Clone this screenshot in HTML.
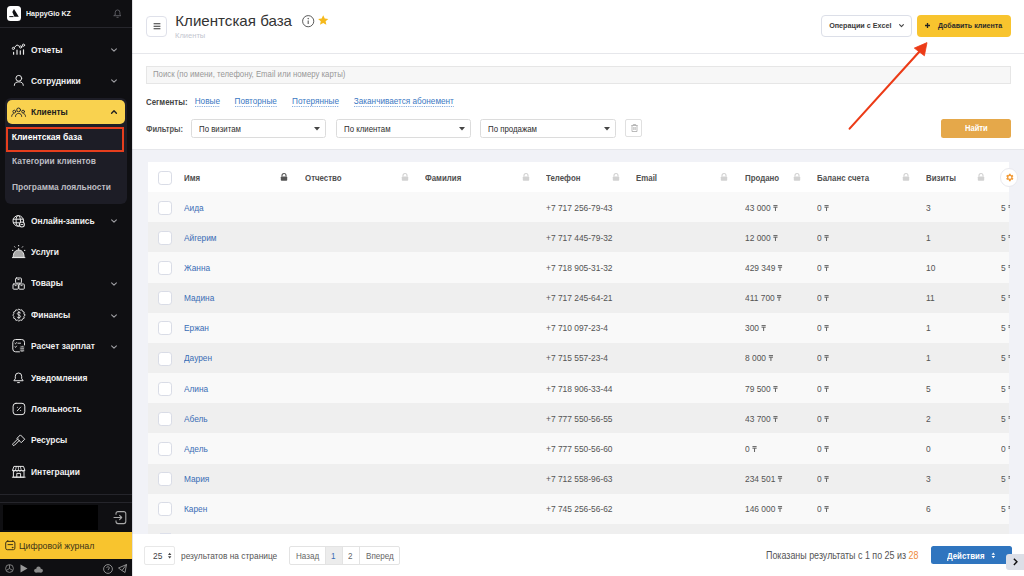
<!DOCTYPE html><html><head><meta charset="utf-8"><style>
*{margin:0;padding:0;box-sizing:border-box}
html,body{width:1024px;height:576px;overflow:hidden;background:#fff;font-family:"Liberation Sans",sans-serif}
.t{position:absolute;white-space:nowrap}
.a{position:absolute}
svg{position:absolute;overflow:visible}
.tg{text-decoration:overline;text-decoration-thickness:0.8px}
</style></head><body>
<div class="a" style="left:0;top:0;width:132px;height:576px;background:#0f0f12"></div>
<div class="a" style="left:6.7px;top:6px;width:14.4px;height:14.5px;background:#fff;border-radius:3.5px"></div>
<svg style="left:6.7px;top:6px" width="14" height="14" viewBox="0 0 14 14"><path d="M7 3 L11.8 10.7 L7.4 10.7 L5.3 5.9 Z" fill="#0f0f12"/><rect x="2.3" y="10.1" width="4.2" height="1" fill="#0f0f12"/></svg>
<div class="t" style="left:26px;top:6.50px;font-size:7.668px;line-height:14px;color:#f2f2f2;font-weight:bold;transform:scaleX(0.9259);transform-origin:0 50%;">HappyGio KZ</div>
<svg style="left:113.5px;top:8.5px" width="9" height="10" viewBox="0 0 9 10"><path d="M1.2 5.6 V3.6 A2.3 2.6 0 0 1 5.9 3.6 V5.6 L7 6.7 H0.1 Z M2.9 8.3 H4.2" fill="none" stroke="#5a5a60" stroke-width="1" stroke-linejoin="round" stroke-linecap="round"/></svg>
<div class="a" style="left:0;top:27px;width:132px;height:1px;background:#26262c"></div>
<div class="t" style="left:30.8px;top:42.60px;font-size:9.295px;line-height:14px;color:#f0f0f0;font-weight:bold;transform:scaleX(0.9091);transform-origin:0 50%;">Отчеты</div>
<svg style="left:111px;top:47.5px" width="6" height="4" viewBox="0 0 6 4"><path d="M0.6 0.8 L3 3.2 L5.4 0.8" fill="none" stroke="#a0a0a4" stroke-width="1.1" stroke-linecap="round" stroke-linejoin="round"/></svg>
<div class="t" style="left:30.8px;top:74.30px;font-size:9.295px;line-height:14px;color:#f0f0f0;font-weight:bold;transform:scaleX(0.9091);transform-origin:0 50%;">Сотрудники</div>
<svg style="left:111px;top:79.3px" width="6" height="4" viewBox="0 0 6 4"><path d="M0.6 0.8 L3 3.2 L5.4 0.8" fill="none" stroke="#a0a0a4" stroke-width="1.1" stroke-linecap="round" stroke-linejoin="round"/></svg>
<div class="a" style="left:4.5px;top:98px;width:122.5px;height:106px;background:#1d1d26;border-radius:6px"></div>
<div class="a" style="left:6.8px;top:100px;width:118.2px;height:24.3px;background:#f9d24f;border-radius:5px"></div>
<div class="t" style="left:30.8px;top:105.40px;font-size:9.295px;line-height:14px;color:#1c1c1c;font-weight:bold;transform:scaleX(0.9091);transform-origin:0 50%;">Клиенты</div>
<svg style="left:111px;top:110px" width="6" height="4" viewBox="0 0 6 4"><path d="M0.6 3.2 L3 0.8 L5.4 3.2" fill="none" stroke="#222" stroke-width="1.4" stroke-linecap="round" stroke-linejoin="round"/></svg>
<div class="a" style="left:6.3px;top:127px;width:118px;height:25px;border:2px solid #e63e1d"></div>
<div class="t" style="left:11.7px;top:130.20px;font-size:8.580px;line-height:14px;color:#ffffff;font-weight:bold;">Клиентская база</div>
<div class="t" style="left:11.7px;top:153.60px;font-size:9.083px;line-height:14px;color:#bcbcc2;font-weight:bold;transform:scaleX(0.9259);transform-origin:0 50%;">Категории клиентов</div>
<div class="t" style="left:11.7px;top:180.10px;font-size:9.104px;line-height:14px;color:#bcbcc2;font-weight:bold;transform:scaleX(0.9259);transform-origin:0 50%;">Программа лояльности</div>
<div class="t" style="left:30.8px;top:213.80px;font-size:9.295px;line-height:14px;color:#f0f0f0;font-weight:bold;transform:scaleX(0.9091);transform-origin:0 50%;">Онлайн-запись</div>
<svg style="left:111px;top:219.3px" width="6" height="4" viewBox="0 0 6 4"><path d="M0.6 0.8 L3 3.2 L5.4 0.8" fill="none" stroke="#a0a0a4" stroke-width="1.1" stroke-linecap="round" stroke-linejoin="round"/></svg>
<div class="t" style="left:30.8px;top:244.80px;font-size:9.295px;line-height:14px;color:#f0f0f0;font-weight:bold;transform:scaleX(0.9091);transform-origin:0 50%;">Услуги</div>
<div class="t" style="left:30.8px;top:276.40px;font-size:9.295px;line-height:14px;color:#f0f0f0;font-weight:bold;transform:scaleX(0.9091);transform-origin:0 50%;">Товары</div>
<svg style="left:111px;top:281.90000000000003px" width="6" height="4" viewBox="0 0 6 4"><path d="M0.6 0.8 L3 3.2 L5.4 0.8" fill="none" stroke="#a0a0a4" stroke-width="1.1" stroke-linecap="round" stroke-linejoin="round"/></svg>
<div class="t" style="left:30.8px;top:308.00px;font-size:9.295px;line-height:14px;color:#f0f0f0;font-weight:bold;transform:scaleX(0.9091);transform-origin:0 50%;">Финансы</div>
<svg style="left:111px;top:313.5px" width="6" height="4" viewBox="0 0 6 4"><path d="M0.6 0.8 L3 3.2 L5.4 0.8" fill="none" stroke="#a0a0a4" stroke-width="1.1" stroke-linecap="round" stroke-linejoin="round"/></svg>
<div class="t" style="left:30.8px;top:339.30px;font-size:9.295px;line-height:14px;color:#f0f0f0;font-weight:bold;transform:scaleX(0.9091);transform-origin:0 50%;">Расчет зарплат</div>
<svg style="left:111px;top:344.8px" width="6" height="4" viewBox="0 0 6 4"><path d="M0.6 0.8 L3 3.2 L5.4 0.8" fill="none" stroke="#a0a0a4" stroke-width="1.1" stroke-linecap="round" stroke-linejoin="round"/></svg>
<div class="t" style="left:30.8px;top:370.80px;font-size:9.295px;line-height:14px;color:#f0f0f0;font-weight:bold;transform:scaleX(0.9091);transform-origin:0 50%;">Уведомления</div>
<div class="t" style="left:30.8px;top:401.80px;font-size:9.295px;line-height:14px;color:#f0f0f0;font-weight:bold;transform:scaleX(0.9091);transform-origin:0 50%;">Лояльность</div>
<div class="t" style="left:30.8px;top:433.30px;font-size:9.295px;line-height:14px;color:#f0f0f0;font-weight:bold;transform:scaleX(0.9091);transform-origin:0 50%;">Ресурсы</div>
<div class="t" style="left:30.8px;top:464.60px;font-size:9.295px;line-height:14px;color:#f0f0f0;font-weight:bold;transform:scaleX(0.9091);transform-origin:0 50%;">Интеграции</div>
<svg style="left:0;top:0" width="132" height="576" viewBox="0 0 132 576" fill="none" stroke="#e6e6e6" stroke-width="1" stroke-linecap="round" stroke-linejoin="round"><path d="M13.4 48.4 L17 44.9 L20.6 47 L23.5 45.2"/><circle cx="13.4" cy="48.4" r="1.1" fill="#0f0f12"/><circle cx="20.6" cy="47" r="1.1" fill="#0f0f12"/><circle cx="23.5" cy="45.2" r="1.1" fill="#0f0f12"/><path d="M13.6 52.4V54.2 M17 50.2V54.2 M20.3 50.8V54.2 M23.5 49.8V54.2" stroke-width="1.2"/><circle cx="18.8" cy="78.3" r="2.9"/><path d="M14.3 85.4 C14.3 82.7 16.3 81.9 18.8 81.9 C21.3 81.9 23.3 82.7 23.3 85.4"/><g stroke="#2a2a2a"><circle cx="18.6" cy="109.9" r="1.9"/><circle cx="14.3" cy="111.6" r="1.4"/><circle cx="23.1" cy="111.6" r="1.4"/><path d="M15.5 116.4 C15.5 114.4 16.8 113.5 18.6 113.5 C20.4 113.5 21.7 114.4 21.7 116.4 M11.7 116.3 C11.7 114.7 12.5 113.9 13.4 113.7 M25.5 116.3 C25.5 114.7 24.7 113.9 23.8 113.7"/></g><circle cx="18.3" cy="220.9" r="5.3"/><ellipse cx="18.3" cy="220.9" rx="2.2" ry="5.3"/><path d="M13.2 219.2 H23.4 M13.4 222.8 H19"/><circle cx="21.9" cy="224.5" r="2.5" fill="#0f0f12" stroke-width="1.1"/><path d="M21 224.5 H22.8" stroke-width="0.9"/><path d="M12.4 257.6 H24.9"/><path d="M13.2 257 C13.2 252.3 15.6 250 18.65 250 C21.7 250 24.1 252.3 24.1 257 Z" fill="#a8a8a8"/><path d="M18.65 248.4V249.8 M14.6 246.7L15 247.2 M18.65 245.4V245.9 M22.7 246.7L22.3 247.2 M12.4 250.4H12.9 M24.4 250.4H24.9"/><rect x="15.6" y="278" width="5.8" height="5.1" rx="0.8"/><rect x="13" y="284" width="5.3" height="5.2" rx="0.8"/><rect x="18.9" y="284" width="5.4" height="5.2" rx="0.8"/><path d="M17.9 279.6H19.1 M15.1 285.6H16.2 M21 285.6H22.1" stroke-width="0.9"/><polygon points="25.00,315.10 23.92,316.45 24.18,318.15 22.58,318.78 21.95,320.38 20.25,320.12 18.90,321.20 17.55,320.12 15.85,320.38 15.22,318.78 13.62,318.15 13.88,316.45 12.80,315.10 13.88,313.75 13.62,312.05 15.22,311.42 15.85,309.82 17.55,310.08 18.90,309.00 20.25,310.08 21.95,309.82 22.58,311.42 24.18,312.05 23.92,313.75" stroke-width="0.9"/><path d="M20.6 312.9 C20.1 312.1 17.3 312 17.3 313.6 C17.3 315.2 20.6 314.7 20.6 316.5 C20.6 318.1 17.6 318.1 17.1 317.2 M18.9 311.3V318.9" stroke-width="0.9"/><path d="M19.6 351.8 H15.6 A2.8 2.8 0 0 1 12.8 349 V342.3 A2.8 2.8 0 0 1 15.6 339.5 H21.7 A2.8 2.8 0 0 1 24.5 342.3 V345"/><path d="M14.9 343.3 L15.5 343.9 L16.5 342.6 M17.9 343.2 H20.6 M14.9 346.8 L15.5 347.4 L16.5 346.1" stroke-width="0.9"/><rect x="19.8" y="345.6" width="4.7" height="6.5" rx="1.6" fill="#a8a8a8" stroke="#0f0f12" stroke-width="0.8"/><path d="M20.3 347.7H24 M20.3 349.7H24" stroke="#0f0f12" stroke-width="0.6"/><path d="M14.1 380.4 L15.3 378.7 V376.2 A3.2 3.2 0 0 1 21.7 376.2 V378.7 L22.9 380.4 Z"/><path d="M17.6 382.6 H19.4"/><rect x="13.1" y="403.3" width="11.7" height="11.3" rx="2.8"/><path d="M17.3 410.8 L20.7 407.1" stroke-width="0.9"/><circle cx="17.4" cy="407.3" r="0.5" fill="#e6e6e6" stroke="none"/><circle cx="20.6" cy="410.6" r="0.5" fill="#e6e6e6" stroke="none"/><path d="M17.9 438.8 L13 443.7 A1 1 0 0 0 14.5 445.2 L19.4 440.3"/><path d="M17.2 438.1 L20.4 434.9 L24.7 439.2 L21.5 442.4 Z" /><path d="M12.6 470.2 L13.9 466.4 H23.5 L24.8 470.2 Z"/><path d="M12.6 470.2 C12.6 471.6 15.4 471.6 15.4 470.2 C15.4 471.6 18.4 471.6 18.4 470.2 C18.4 471.6 21.3 471.6 21.3 470.2 C21.3 471.6 24.6 471.6 24.6 470.2 M16.4 466.4 L15.4 470.2 M20.3 466.4 L21.3 470.2 M18.4 466.4 V470.2" stroke-width="0.8"/><path d="M13.4 471.3 V477.2 H24 V471.3 M12.3 477.2 H25.1 M16.8 477.2 V473.4 H20.6 V477.2"/></svg>
<div class="a" style="left:0;top:493.6px;width:132px;height:1px;background:#25252b"></div>
<div class="a" style="left:0;top:502px;width:132px;height:1px;background:#25252b"></div>
<div class="a" style="left:3px;top:504.7px;width:95px;height:25.3px;background:#000"></div>
<svg style="left:0;top:0" width="132" height="576" viewBox="0 0 132 576" fill="none" stroke="#a8a8a8" stroke-width="1.1" stroke-linecap="round" stroke-linejoin="round"><path d="M116 514.3 V513.6 A2 2 0 0 1 118 511.6 H123.8 A2 2 0 0 1 125.8 513.6 V521.6 A2 2 0 0 1 123.8 523.6 H118 A2 2 0 0 1 116 521.6 V520.8"/><path d="M114 517.5 H121.6 M119.6 515.4 L121.7 517.5 L119.6 519.6"/></svg>
<div class="a" style="left:0;top:532px;width:132px;height:26.6px;background:#f8c42e"></div>
<svg style="left:0;top:0" width="132" height="576" viewBox="0 0 132 576" fill="none" stroke="#3e3418" stroke-width="1" stroke-linecap="round"><rect x="5.7" y="541.4" width="9.2" height="8.3" rx="1.6"/><path d="M8 544.6H12.6 M7.8 540.6V541.6 M12.8 540.6V541.6"/><circle cx="12.5" cy="547.6" r="0.35" fill="#3e3418"/></svg>
<div class="t" style="left:18.7px;top:538.80px;font-size:9.240px;line-height:14px;color:#3e3418;font-weight:normal;transform:scaleX(0.9524);transform-origin:0 50%;">Цифровой журнал</div>
<svg style="left:5px;top:564px" width="9" height="9" viewBox="0 0 9 9" fill="none" stroke="#888" stroke-width="0.9"><circle cx="4.5" cy="4.5" r="3.9"/><path d="M4.5 4.5V1 M4.5 4.5L1.5 6.3 M4.5 4.5L7.5 6.3"/></svg>
<svg style="left:19.7px;top:564px" width="8" height="9" viewBox="0 0 8 9"><path d="M0.5 0.5 L7.5 4.5 L0.5 8.5 Z" fill="#999"/></svg>
<svg style="left:33.5px;top:565.5px" width="9" height="7" viewBox="0 0 9 7" fill="#8a8a8a"><circle cx="2" cy="4.6" r="1.9"/><circle cx="4.5" cy="2.6" r="2.2"/><circle cx="7" cy="4.6" r="1.9"/><rect x="1.5" y="4" width="6" height="2.5"/></svg>
<svg style="left:103px;top:563.5px" width="10" height="10" viewBox="0 0 10 10" fill="none" stroke="#999" stroke-width="0.9"><circle cx="5" cy="5" r="4.4"/><path d="M3.6 3.8 C3.6 2.5 6.4 2.5 6.4 3.9 C6.4 5 5 5 5 6.1 M5 7.4V7.6"/></svg>
<svg style="left:117.5px;top:564px" width="9" height="9" viewBox="0 0 9 9" fill="none" stroke="#999" stroke-width="0.9" stroke-linejoin="round"><path d="M0.5 4 L8.5 0.5 L7 8.5 L4 6.5 Z M4 6.5 L8.5 0.5"/></svg>
<div class="a" style="left:132px;top:53px;width:892px;height:1px;background:#e6e7eb"></div>
<div class="a" style="left:146.3px;top:15.6px;width:20.9px;height:21px;border:1px solid #dfe1ea;border-radius:4px"></div>
<svg style="left:152.7px;top:22.8px" width="8" height="7" viewBox="0 0 8 7"><path d="M0.6 0.8H7.4 M0.6 3.3H7.4 M0.6 5.8H7.4" stroke="#333" stroke-width="1.1"/></svg>
<div class="t" style="left:175.3px;top:11.20px;font-size:15.110px;line-height:20px;color:#333;font-weight:normal;">Клиентская база</div>
<svg style="left:301.6px;top:15px" width="12.4" height="12.4" viewBox="0 0 12.4 12.4" fill="none" stroke="#5a5a5a" stroke-width="1"><circle cx="6.2" cy="6.2" r="5.6"/><path d="M6.2 5.4V9" stroke-width="1.1"/><circle cx="6.2" cy="3.7" r="0.35" fill="#5a5a5a"/></svg>
<svg style="left:318.2px;top:15.4px" width="10.4" height="10.4" viewBox="1.5 1.5 21 20"><path d="M12 1.5l3.1 6.6 7.2.8-5.4 4.9 1.5 7.1L12 17.3l-6.4 3.6 1.5-7.1L1.7 8.9l7.2-.8z" fill="#f5b91c"/></svg>
<div class="t" style="left:175px;top:29.20px;font-size:7.550px;line-height:14px;color:#c3c6cf;font-weight:normal;">Клиенты</div>
<div class="a" style="left:821.3px;top:15.3px;width:90.3px;height:21.6px;border:1px solid #dcdfe8;border-radius:4px;background:#fff"></div>
<div class="t" style="left:829.2px;top:19.10px;font-size:7.200px;line-height:14px;color:#3a3a3a;font-weight:bold;">Операции с Excel</div>
<svg style="left:898.6px;top:24.3px" width="5" height="3.5" viewBox="0 0 5 3.5"><path d="M0.6 0.6L2.5 2.6L4.4 0.6" fill="none" stroke="#444" stroke-width="1.1" stroke-linecap="round" stroke-linejoin="round"/></svg>
<div class="a" style="left:917px;top:15.3px;width:94px;height:21.5px;border-radius:4px;background:#f8c42e"></div>
<svg style="left:925.3px;top:23.3px" width="5" height="5" viewBox="0 0 5 5"><path d="M2.5 0V5 M0 2.5H5" stroke="#222" stroke-width="1.3"/></svg>
<div class="t" style="left:937.9px;top:19.10px;font-size:7.080px;line-height:14px;color:#2a2a2a;font-weight:bold;">Добавить клиента</div>
<div class="a" style="left:146.1px;top:66.3px;width:865px;height:17.5px;border:1px solid #e6e6e6;background:#f7f7f7"></div>
<div class="t" style="left:153px;top:67.60px;font-size:8.268px;line-height:14px;color:#979797;font-weight:normal;transform:scaleX(0.9434);transform-origin:0 50%;">Поиск (по имени, телефону, Email или номеру карты)</div>
<div class="t" style="left:146.3px;top:94.70px;font-size:8.690px;line-height:14px;color:#444;font-weight:bold;transform:scaleX(0.9091);transform-origin:0 50%;">Сегменты:</div>
<div class="t" style="left:194.7px;top:94.9px;font-size:8.2px;line-height:13px;height:12.4px;color:#3b78c3;background-image:linear-gradient(to right,#7fa8dc 55%,rgba(255,255,255,0) 55%);background-size:1.8px 0.9px;background-repeat:repeat-x;background-position:0 100%">Новые</div>
<div class="t" style="left:234.5px;top:94.9px;font-size:8.2px;line-height:13px;height:12.4px;color:#3b78c3;background-image:linear-gradient(to right,#7fa8dc 55%,rgba(255,255,255,0) 55%);background-size:1.8px 0.9px;background-repeat:repeat-x;background-position:0 100%">Повторные</div>
<div class="t" style="left:292.1px;top:94.9px;font-size:8.2px;line-height:13px;height:12.4px;color:#3b78c3;background-image:linear-gradient(to right,#7fa8dc 55%,rgba(255,255,255,0) 55%);background-size:1.8px 0.9px;background-repeat:repeat-x;background-position:0 100%">Потерянные</div>
<div class="t" style="left:353.8px;top:94.9px;font-size:8.2px;line-height:13px;height:12.4px;color:#3b78c3;background-image:linear-gradient(to right,#7fa8dc 55%,rgba(255,255,255,0) 55%);background-size:1.8px 0.9px;background-repeat:repeat-x;background-position:0 100%">Заканчивается абонемент</div>
<div class="t" style="left:146.3px;top:121.60px;font-size:8.294px;line-height:14px;color:#555;font-weight:bold;transform:scaleX(0.9091);transform-origin:0 50%;">Фильтры:</div>
<div class="a" style="left:191.2px;top:119.3px;width:134.5px;height:18.6px;border:1px solid #dcdcdc;border-radius:2.5px;background:#fff"></div>
<div class="t" style="left:199.2px;top:122.00px;font-size:8.635px;line-height:14px;color:#2e2e2e;font-weight:normal;transform:scaleX(0.9091);transform-origin:0 50%;">По визитам</div>
<svg style="left:313.7px;top:126.5px" width="6" height="4" viewBox="0 0 6 4"><path d="M0 0H6L3 3.5Z" fill="#444"/></svg>
<div class="a" style="left:336.3px;top:119.3px;width:134.3px;height:18.6px;border:1px solid #dcdcdc;border-radius:2.5px;background:#fff"></div>
<div class="t" style="left:344.3px;top:122.00px;font-size:8.635px;line-height:14px;color:#2e2e2e;font-weight:normal;transform:scaleX(0.9091);transform-origin:0 50%;">По клиентам</div>
<svg style="left:458.6px;top:126.5px" width="6" height="4" viewBox="0 0 6 4"><path d="M0 0H6L3 3.5Z" fill="#444"/></svg>
<div class="a" style="left:480.1px;top:119.3px;width:135.5px;height:18.6px;border:1px solid #dcdcdc;border-radius:2.5px;background:#fff"></div>
<div class="t" style="left:488.1px;top:122.00px;font-size:8.635px;line-height:14px;color:#2e2e2e;font-weight:normal;transform:scaleX(0.9091);transform-origin:0 50%;">По продажам</div>
<svg style="left:603.6px;top:126.5px" width="6" height="4" viewBox="0 0 6 4"><path d="M0 0H6L3 3.5Z" fill="#444"/></svg>
<div class="a" style="left:625.4px;top:119.3px;width:16.6px;height:18.2px;border:1px solid #e0e0e0;border-radius:2px;background:#fff"></div>
<svg style="left:630.5px;top:124px" width="7" height="8" viewBox="0 0 7 8" fill="none" stroke="#aaa" stroke-width="0.8"><path d="M0.3 1.5H6.7 M2.3 1.5V0.5H4.7V1.5 M1 1.5V7.5H6V1.5 M2.8 3V6 M4.2 3V6"/></svg>
<div class="a" style="left:941px;top:119.3px;width:70.2px;height:18.6px;border-radius:2.5px;background:#e5a84a"></div>
<div class="t" style="left:964.5px;top:121.20px;font-size:8.360px;line-height:14px;color:#fff;font-weight:bold;transform:scaleX(0.9091);transform-origin:0 50%;">Найти</div>
<div class="a" style="left:132px;top:148.6px;width:892px;height:1px;background:#e6e7eb"></div>
<div class="a" style="left:132px;top:149.6px;width:892px;height:384.4px;background:#f1f2f7"></div>
<div class="a" style="left:147.8px;top:161.9px;width:861.5px;height:372.1px;background:#fff"></div>
<div class="a" style="left:158.1px;top:171.30px;width:14.1px;height:14.1px;border:1px solid #d9dce6;border-radius:3.2px;background:#fff"></div>
<div class="t" style="left:184.1px;top:170.70px;font-size:8.690px;line-height:14px;color:#505050;font-weight:bold;transform:scaleX(0.9091);transform-origin:0 50%;">Имя</div>
<svg style="left:280.3px;top:173.39999999999998px" width="8" height="8" viewBox="0 0 8 8"><path d="M2 3.5V2.5 A2 2 0 0 1 6 2.5V3.5" fill="none" stroke="#555" stroke-width="1.1"/><rect x="0.8" y="3.5" width="6.4" height="4.3" rx="0.8" fill="#555"/></svg>
<div class="t" style="left:304.8px;top:170.70px;font-size:8.690px;line-height:14px;color:#505050;font-weight:bold;transform:scaleX(0.9091);transform-origin:0 50%;">Отчество</div>
<svg style="left:400.7px;top:173.39999999999998px" width="8" height="8" viewBox="0 0 8 8"><path d="M2 3.5V2.5 A2 2 0 0 1 6 2.5V3.5" fill="none" stroke="#d2d2d2" stroke-width="1.1"/><rect x="0.8" y="3.5" width="6.4" height="4.3" rx="0.8" fill="#d2d2d2"/></svg>
<div class="t" style="left:425.4px;top:170.70px;font-size:8.690px;line-height:14px;color:#505050;font-weight:bold;transform:scaleX(0.9091);transform-origin:0 50%;">Фамилия</div>
<svg style="left:521.5px;top:173.39999999999998px" width="8" height="8" viewBox="0 0 8 8"><path d="M2 3.5V2.5 A2 2 0 0 1 6 2.5V3.5" fill="none" stroke="#d2d2d2" stroke-width="1.1"/><rect x="0.8" y="3.5" width="6.4" height="4.3" rx="0.8" fill="#d2d2d2"/></svg>
<div class="t" style="left:546.1px;top:170.70px;font-size:8.690px;line-height:14px;color:#505050;font-weight:bold;transform:scaleX(0.9091);transform-origin:0 50%;">Телефон</div>
<svg style="left:611.9px;top:173.39999999999998px" width="8" height="8" viewBox="0 0 8 8"><path d="M2 3.5V2.5 A2 2 0 0 1 6 2.5V3.5" fill="none" stroke="#d2d2d2" stroke-width="1.1"/><rect x="0.8" y="3.5" width="6.4" height="4.3" rx="0.8" fill="#d2d2d2"/></svg>
<div class="t" style="left:636.4px;top:170.70px;font-size:8.690px;line-height:14px;color:#505050;font-weight:bold;transform:scaleX(0.9091);transform-origin:0 50%;">Email</div>
<svg style="left:720.2px;top:173.39999999999998px" width="8" height="8" viewBox="0 0 8 8"><path d="M2 3.5V2.5 A2 2 0 0 1 6 2.5V3.5" fill="none" stroke="#d2d2d2" stroke-width="1.1"/><rect x="0.8" y="3.5" width="6.4" height="4.3" rx="0.8" fill="#d2d2d2"/></svg>
<div class="t" style="left:745px;top:170.70px;font-size:8.690px;line-height:14px;color:#505050;font-weight:bold;transform:scaleX(0.9091);transform-origin:0 50%;">Продано</div>
<svg style="left:793px;top:173.39999999999998px" width="8" height="8" viewBox="0 0 8 8"><path d="M2 3.5V2.5 A2 2 0 0 1 6 2.5V3.5" fill="none" stroke="#d2d2d2" stroke-width="1.1"/><rect x="0.8" y="3.5" width="6.4" height="4.3" rx="0.8" fill="#d2d2d2"/></svg>
<div class="t" style="left:817px;top:170.70px;font-size:8.690px;line-height:14px;color:#505050;font-weight:bold;transform:scaleX(0.9091);transform-origin:0 50%;">Баланс счета</div>
<svg style="left:901.8px;top:173.39999999999998px" width="8" height="8" viewBox="0 0 8 8"><path d="M2 3.5V2.5 A2 2 0 0 1 6 2.5V3.5" fill="none" stroke="#d2d2d2" stroke-width="1.1"/><rect x="0.8" y="3.5" width="6.4" height="4.3" rx="0.8" fill="#d2d2d2"/></svg>
<div class="t" style="left:925.6px;top:170.70px;font-size:8.690px;line-height:14px;color:#505050;font-weight:bold;transform:scaleX(0.9091);transform-origin:0 50%;">Визиты</div>
<svg style="left:976.5px;top:173.39999999999998px" width="8" height="8" viewBox="0 0 8 8"><path d="M2 3.5V2.5 A2 2 0 0 1 6 2.5V3.5" fill="none" stroke="#d2d2d2" stroke-width="1.1"/><rect x="0.8" y="3.5" width="6.4" height="4.3" rx="0.8" fill="#d2d2d2"/></svg>
<div class="a" style="left:148px;top:192.0px;width:861.3px;height:342px;overflow:hidden">
<div class="a" style="left:0;top:0.00px;width:861.3px;height:30.27px;background:#f9f9f9"></div>
<div class="a" style="left:0;top:30.17px;width:861.3px;height:30.27px;background:#efefef"></div>
<div class="a" style="left:0;top:60.34px;width:861.3px;height:30.27px;background:#f9f9f9"></div>
<div class="a" style="left:0;top:90.51px;width:861.3px;height:30.27px;background:#efefef"></div>
<div class="a" style="left:0;top:120.68px;width:861.3px;height:30.27px;background:#f9f9f9"></div>
<div class="a" style="left:0;top:150.85px;width:861.3px;height:30.27px;background:#efefef"></div>
<div class="a" style="left:0;top:181.02px;width:861.3px;height:30.27px;background:#f9f9f9"></div>
<div class="a" style="left:0;top:211.19px;width:861.3px;height:30.27px;background:#efefef"></div>
<div class="a" style="left:0;top:241.36px;width:861.3px;height:30.27px;background:#f9f9f9"></div>
<div class="a" style="left:0;top:271.53px;width:861.3px;height:30.27px;background:#efefef"></div>
<div class="a" style="left:0;top:301.70px;width:861.3px;height:30.27px;background:#f9f9f9"></div>
<div class="a" style="left:0;top:331.87px;width:861.3px;height:30.27px;background:#efefef"></div>
</div>
<div class="a" style="left:158.1px;top:200.69px;width:14.1px;height:14.1px;border:1px solid #d9dce6;border-radius:3.2px;background:#fff"></div>
<div class="t" style="left:184.1px;top:200.59px;font-size:9.130px;line-height:14px;color:#3a6db5;font-weight:normal;transform:scaleX(0.9091);transform-origin:0 50%;">Аида</div>
<div class="t" style="left:546.1px;top:200.59px;font-size:9.240px;line-height:14px;color:#545454;font-weight:normal;transform:scaleX(0.9091);transform-origin:0 50%;">+7 717 256-79-43</div>
<div class="t" style="left:745px;top:200.59px;font-size:9.240px;line-height:14px;color:#545454;font-weight:normal;transform:scaleX(0.9091);transform-origin:0 50%;">43 000<svg style="position:relative;display:inline-block;vertical-align:baseline;margin-left:2.6px" width="5" height="6" viewBox="0 0 5 6"><path d="M0.2 0.6H4.8 M0.2 2.2H4.8 M2.5 2.2V6" stroke="#5a5a5a" stroke-width="1"/></svg></div>
<div class="t" style="left:817px;top:200.59px;font-size:9.240px;line-height:14px;color:#545454;font-weight:normal;transform:scaleX(0.9091);transform-origin:0 50%;">0<svg style="position:relative;display:inline-block;vertical-align:baseline;margin-left:2.6px" width="5" height="6" viewBox="0 0 5 6"><path d="M0.2 0.6H4.8 M0.2 2.2H4.8 M2.5 2.2V6" stroke="#5a5a5a" stroke-width="1"/></svg></div>
<div class="t" style="left:925.6px;top:200.59px;font-size:9.240px;line-height:14px;color:#545454;font-weight:normal;transform:scaleX(0.9091);transform-origin:0 50%;">3</div>
<div class="t" style="left:1000.6px;top:200.59px;font-size:9.240px;line-height:14px;color:#545454;font-weight:normal;transform:scaleX(0.9091);transform-origin:0 50%;">5<svg style="position:relative;display:inline-block;vertical-align:baseline;margin-left:2.6px" width="5" height="6" viewBox="0 0 5 6"><path d="M0.2 0.6H4.8 M0.2 2.2H4.8 M2.5 2.2V6" stroke="#5a5a5a" stroke-width="1"/></svg></div>
<div class="a" style="left:158.1px;top:230.86px;width:14.1px;height:14.1px;border:1px solid #d9dce6;border-radius:3.2px;background:#fff"></div>
<div class="t" style="left:184.1px;top:230.76px;font-size:9.130px;line-height:14px;color:#3a6db5;font-weight:normal;transform:scaleX(0.9091);transform-origin:0 50%;">Айгерим</div>
<div class="t" style="left:546.1px;top:230.76px;font-size:9.240px;line-height:14px;color:#545454;font-weight:normal;transform:scaleX(0.9091);transform-origin:0 50%;">+7 717 445-79-32</div>
<div class="t" style="left:745px;top:230.76px;font-size:9.240px;line-height:14px;color:#545454;font-weight:normal;transform:scaleX(0.9091);transform-origin:0 50%;">12 000<svg style="position:relative;display:inline-block;vertical-align:baseline;margin-left:2.6px" width="5" height="6" viewBox="0 0 5 6"><path d="M0.2 0.6H4.8 M0.2 2.2H4.8 M2.5 2.2V6" stroke="#5a5a5a" stroke-width="1"/></svg></div>
<div class="t" style="left:817px;top:230.76px;font-size:9.240px;line-height:14px;color:#545454;font-weight:normal;transform:scaleX(0.9091);transform-origin:0 50%;">0<svg style="position:relative;display:inline-block;vertical-align:baseline;margin-left:2.6px" width="5" height="6" viewBox="0 0 5 6"><path d="M0.2 0.6H4.8 M0.2 2.2H4.8 M2.5 2.2V6" stroke="#5a5a5a" stroke-width="1"/></svg></div>
<div class="t" style="left:925.6px;top:230.76px;font-size:9.240px;line-height:14px;color:#545454;font-weight:normal;transform:scaleX(0.9091);transform-origin:0 50%;">1</div>
<div class="t" style="left:1000.6px;top:230.76px;font-size:9.240px;line-height:14px;color:#545454;font-weight:normal;transform:scaleX(0.9091);transform-origin:0 50%;">5<svg style="position:relative;display:inline-block;vertical-align:baseline;margin-left:2.6px" width="5" height="6" viewBox="0 0 5 6"><path d="M0.2 0.6H4.8 M0.2 2.2H4.8 M2.5 2.2V6" stroke="#5a5a5a" stroke-width="1"/></svg></div>
<div class="a" style="left:158.1px;top:261.03px;width:14.1px;height:14.1px;border:1px solid #d9dce6;border-radius:3.2px;background:#fff"></div>
<div class="t" style="left:184.1px;top:260.93px;font-size:9.130px;line-height:14px;color:#3a6db5;font-weight:normal;transform:scaleX(0.9091);transform-origin:0 50%;">Жанна</div>
<div class="t" style="left:546.1px;top:260.93px;font-size:9.240px;line-height:14px;color:#545454;font-weight:normal;transform:scaleX(0.9091);transform-origin:0 50%;">+7 718 905-31-32</div>
<div class="t" style="left:745px;top:260.93px;font-size:9.240px;line-height:14px;color:#545454;font-weight:normal;transform:scaleX(0.9091);transform-origin:0 50%;">429 349<svg style="position:relative;display:inline-block;vertical-align:baseline;margin-left:2.6px" width="5" height="6" viewBox="0 0 5 6"><path d="M0.2 0.6H4.8 M0.2 2.2H4.8 M2.5 2.2V6" stroke="#5a5a5a" stroke-width="1"/></svg></div>
<div class="t" style="left:817px;top:260.93px;font-size:9.240px;line-height:14px;color:#545454;font-weight:normal;transform:scaleX(0.9091);transform-origin:0 50%;">0<svg style="position:relative;display:inline-block;vertical-align:baseline;margin-left:2.6px" width="5" height="6" viewBox="0 0 5 6"><path d="M0.2 0.6H4.8 M0.2 2.2H4.8 M2.5 2.2V6" stroke="#5a5a5a" stroke-width="1"/></svg></div>
<div class="t" style="left:925.6px;top:260.93px;font-size:9.240px;line-height:14px;color:#545454;font-weight:normal;transform:scaleX(0.9091);transform-origin:0 50%;">10</div>
<div class="t" style="left:1000.6px;top:260.93px;font-size:9.240px;line-height:14px;color:#545454;font-weight:normal;transform:scaleX(0.9091);transform-origin:0 50%;">5<svg style="position:relative;display:inline-block;vertical-align:baseline;margin-left:2.6px" width="5" height="6" viewBox="0 0 5 6"><path d="M0.2 0.6H4.8 M0.2 2.2H4.8 M2.5 2.2V6" stroke="#5a5a5a" stroke-width="1"/></svg></div>
<div class="a" style="left:158.1px;top:291.19px;width:14.1px;height:14.1px;border:1px solid #d9dce6;border-radius:3.2px;background:#fff"></div>
<div class="t" style="left:184.1px;top:291.09px;font-size:9.130px;line-height:14px;color:#3a6db5;font-weight:normal;transform:scaleX(0.9091);transform-origin:0 50%;">Мадина</div>
<div class="t" style="left:546.1px;top:291.09px;font-size:9.240px;line-height:14px;color:#545454;font-weight:normal;transform:scaleX(0.9091);transform-origin:0 50%;">+7 717 245-64-21</div>
<div class="t" style="left:745px;top:291.09px;font-size:9.240px;line-height:14px;color:#545454;font-weight:normal;transform:scaleX(0.9091);transform-origin:0 50%;">411 700<svg style="position:relative;display:inline-block;vertical-align:baseline;margin-left:2.6px" width="5" height="6" viewBox="0 0 5 6"><path d="M0.2 0.6H4.8 M0.2 2.2H4.8 M2.5 2.2V6" stroke="#5a5a5a" stroke-width="1"/></svg></div>
<div class="t" style="left:817px;top:291.09px;font-size:9.240px;line-height:14px;color:#545454;font-weight:normal;transform:scaleX(0.9091);transform-origin:0 50%;">0<svg style="position:relative;display:inline-block;vertical-align:baseline;margin-left:2.6px" width="5" height="6" viewBox="0 0 5 6"><path d="M0.2 0.6H4.8 M0.2 2.2H4.8 M2.5 2.2V6" stroke="#5a5a5a" stroke-width="1"/></svg></div>
<div class="t" style="left:925.6px;top:291.09px;font-size:9.240px;line-height:14px;color:#545454;font-weight:normal;transform:scaleX(0.9091);transform-origin:0 50%;">11</div>
<div class="t" style="left:1000.6px;top:291.09px;font-size:9.240px;line-height:14px;color:#545454;font-weight:normal;transform:scaleX(0.9091);transform-origin:0 50%;">5<svg style="position:relative;display:inline-block;vertical-align:baseline;margin-left:2.6px" width="5" height="6" viewBox="0 0 5 6"><path d="M0.2 0.6H4.8 M0.2 2.2H4.8 M2.5 2.2V6" stroke="#5a5a5a" stroke-width="1"/></svg></div>
<div class="a" style="left:158.1px;top:321.37px;width:14.1px;height:14.1px;border:1px solid #d9dce6;border-radius:3.2px;background:#fff"></div>
<div class="t" style="left:184.1px;top:321.26px;font-size:9.130px;line-height:14px;color:#3a6db5;font-weight:normal;transform:scaleX(0.9091);transform-origin:0 50%;">Ержан</div>
<div class="t" style="left:546.1px;top:321.26px;font-size:9.240px;line-height:14px;color:#545454;font-weight:normal;transform:scaleX(0.9091);transform-origin:0 50%;">+7 710 097-23-4</div>
<div class="t" style="left:745px;top:321.26px;font-size:9.240px;line-height:14px;color:#545454;font-weight:normal;transform:scaleX(0.9091);transform-origin:0 50%;">300<svg style="position:relative;display:inline-block;vertical-align:baseline;margin-left:2.6px" width="5" height="6" viewBox="0 0 5 6"><path d="M0.2 0.6H4.8 M0.2 2.2H4.8 M2.5 2.2V6" stroke="#5a5a5a" stroke-width="1"/></svg></div>
<div class="t" style="left:817px;top:321.26px;font-size:9.240px;line-height:14px;color:#545454;font-weight:normal;transform:scaleX(0.9091);transform-origin:0 50%;">0<svg style="position:relative;display:inline-block;vertical-align:baseline;margin-left:2.6px" width="5" height="6" viewBox="0 0 5 6"><path d="M0.2 0.6H4.8 M0.2 2.2H4.8 M2.5 2.2V6" stroke="#5a5a5a" stroke-width="1"/></svg></div>
<div class="t" style="left:925.6px;top:321.26px;font-size:9.240px;line-height:14px;color:#545454;font-weight:normal;transform:scaleX(0.9091);transform-origin:0 50%;">1</div>
<div class="t" style="left:1000.6px;top:321.26px;font-size:9.240px;line-height:14px;color:#545454;font-weight:normal;transform:scaleX(0.9091);transform-origin:0 50%;">5<svg style="position:relative;display:inline-block;vertical-align:baseline;margin-left:2.6px" width="5" height="6" viewBox="0 0 5 6"><path d="M0.2 0.6H4.8 M0.2 2.2H4.8 M2.5 2.2V6" stroke="#5a5a5a" stroke-width="1"/></svg></div>
<div class="a" style="left:158.1px;top:351.54px;width:14.1px;height:14.1px;border:1px solid #d9dce6;border-radius:3.2px;background:#fff"></div>
<div class="t" style="left:184.1px;top:351.44px;font-size:9.130px;line-height:14px;color:#3a6db5;font-weight:normal;transform:scaleX(0.9091);transform-origin:0 50%;">Даурен</div>
<div class="t" style="left:546.1px;top:351.44px;font-size:9.240px;line-height:14px;color:#545454;font-weight:normal;transform:scaleX(0.9091);transform-origin:0 50%;">+7 715 557-23-4</div>
<div class="t" style="left:745px;top:351.44px;font-size:9.240px;line-height:14px;color:#545454;font-weight:normal;transform:scaleX(0.9091);transform-origin:0 50%;">8 000<svg style="position:relative;display:inline-block;vertical-align:baseline;margin-left:2.6px" width="5" height="6" viewBox="0 0 5 6"><path d="M0.2 0.6H4.8 M0.2 2.2H4.8 M2.5 2.2V6" stroke="#5a5a5a" stroke-width="1"/></svg></div>
<div class="t" style="left:817px;top:351.44px;font-size:9.240px;line-height:14px;color:#545454;font-weight:normal;transform:scaleX(0.9091);transform-origin:0 50%;">0<svg style="position:relative;display:inline-block;vertical-align:baseline;margin-left:2.6px" width="5" height="6" viewBox="0 0 5 6"><path d="M0.2 0.6H4.8 M0.2 2.2H4.8 M2.5 2.2V6" stroke="#5a5a5a" stroke-width="1"/></svg></div>
<div class="t" style="left:925.6px;top:351.44px;font-size:9.240px;line-height:14px;color:#545454;font-weight:normal;transform:scaleX(0.9091);transform-origin:0 50%;">1</div>
<div class="t" style="left:1000.6px;top:351.44px;font-size:9.240px;line-height:14px;color:#545454;font-weight:normal;transform:scaleX(0.9091);transform-origin:0 50%;">5<svg style="position:relative;display:inline-block;vertical-align:baseline;margin-left:2.6px" width="5" height="6" viewBox="0 0 5 6"><path d="M0.2 0.6H4.8 M0.2 2.2H4.8 M2.5 2.2V6" stroke="#5a5a5a" stroke-width="1"/></svg></div>
<div class="a" style="left:158.1px;top:381.70px;width:14.1px;height:14.1px;border:1px solid #d9dce6;border-radius:3.2px;background:#fff"></div>
<div class="t" style="left:184.1px;top:381.60px;font-size:9.130px;line-height:14px;color:#3a6db5;font-weight:normal;transform:scaleX(0.9091);transform-origin:0 50%;">Алина</div>
<div class="t" style="left:546.1px;top:381.60px;font-size:9.240px;line-height:14px;color:#545454;font-weight:normal;transform:scaleX(0.9091);transform-origin:0 50%;">+7 718 906-33-44</div>
<div class="t" style="left:745px;top:381.60px;font-size:9.240px;line-height:14px;color:#545454;font-weight:normal;transform:scaleX(0.9091);transform-origin:0 50%;">79 500<svg style="position:relative;display:inline-block;vertical-align:baseline;margin-left:2.6px" width="5" height="6" viewBox="0 0 5 6"><path d="M0.2 0.6H4.8 M0.2 2.2H4.8 M2.5 2.2V6" stroke="#5a5a5a" stroke-width="1"/></svg></div>
<div class="t" style="left:817px;top:381.60px;font-size:9.240px;line-height:14px;color:#545454;font-weight:normal;transform:scaleX(0.9091);transform-origin:0 50%;">0<svg style="position:relative;display:inline-block;vertical-align:baseline;margin-left:2.6px" width="5" height="6" viewBox="0 0 5 6"><path d="M0.2 0.6H4.8 M0.2 2.2H4.8 M2.5 2.2V6" stroke="#5a5a5a" stroke-width="1"/></svg></div>
<div class="t" style="left:925.6px;top:381.60px;font-size:9.240px;line-height:14px;color:#545454;font-weight:normal;transform:scaleX(0.9091);transform-origin:0 50%;">5</div>
<div class="t" style="left:1000.6px;top:381.60px;font-size:9.240px;line-height:14px;color:#545454;font-weight:normal;transform:scaleX(0.9091);transform-origin:0 50%;">5<svg style="position:relative;display:inline-block;vertical-align:baseline;margin-left:2.6px" width="5" height="6" viewBox="0 0 5 6"><path d="M0.2 0.6H4.8 M0.2 2.2H4.8 M2.5 2.2V6" stroke="#5a5a5a" stroke-width="1"/></svg></div>
<div class="a" style="left:158.1px;top:411.88px;width:14.1px;height:14.1px;border:1px solid #d9dce6;border-radius:3.2px;background:#fff"></div>
<div class="t" style="left:184.1px;top:411.77px;font-size:9.130px;line-height:14px;color:#3a6db5;font-weight:normal;transform:scaleX(0.9091);transform-origin:0 50%;">Абель</div>
<div class="t" style="left:546.1px;top:411.77px;font-size:9.240px;line-height:14px;color:#545454;font-weight:normal;transform:scaleX(0.9091);transform-origin:0 50%;">+7 777 550-56-55</div>
<div class="t" style="left:745px;top:411.77px;font-size:9.240px;line-height:14px;color:#545454;font-weight:normal;transform:scaleX(0.9091);transform-origin:0 50%;">43 700<svg style="position:relative;display:inline-block;vertical-align:baseline;margin-left:2.6px" width="5" height="6" viewBox="0 0 5 6"><path d="M0.2 0.6H4.8 M0.2 2.2H4.8 M2.5 2.2V6" stroke="#5a5a5a" stroke-width="1"/></svg></div>
<div class="t" style="left:817px;top:411.77px;font-size:9.240px;line-height:14px;color:#545454;font-weight:normal;transform:scaleX(0.9091);transform-origin:0 50%;">0<svg style="position:relative;display:inline-block;vertical-align:baseline;margin-left:2.6px" width="5" height="6" viewBox="0 0 5 6"><path d="M0.2 0.6H4.8 M0.2 2.2H4.8 M2.5 2.2V6" stroke="#5a5a5a" stroke-width="1"/></svg></div>
<div class="t" style="left:925.6px;top:411.77px;font-size:9.240px;line-height:14px;color:#545454;font-weight:normal;transform:scaleX(0.9091);transform-origin:0 50%;">2</div>
<div class="t" style="left:1000.6px;top:411.77px;font-size:9.240px;line-height:14px;color:#545454;font-weight:normal;transform:scaleX(0.9091);transform-origin:0 50%;">5<svg style="position:relative;display:inline-block;vertical-align:baseline;margin-left:2.6px" width="5" height="6" viewBox="0 0 5 6"><path d="M0.2 0.6H4.8 M0.2 2.2H4.8 M2.5 2.2V6" stroke="#5a5a5a" stroke-width="1"/></svg></div>
<div class="a" style="left:158.1px;top:442.05px;width:14.1px;height:14.1px;border:1px solid #d9dce6;border-radius:3.2px;background:#fff"></div>
<div class="t" style="left:184.1px;top:441.94px;font-size:9.130px;line-height:14px;color:#3a6db5;font-weight:normal;transform:scaleX(0.9091);transform-origin:0 50%;">Адель</div>
<div class="t" style="left:546.1px;top:441.94px;font-size:9.240px;line-height:14px;color:#545454;font-weight:normal;transform:scaleX(0.9091);transform-origin:0 50%;">+7 777 550-56-60</div>
<div class="t" style="left:745px;top:441.94px;font-size:9.240px;line-height:14px;color:#545454;font-weight:normal;transform:scaleX(0.9091);transform-origin:0 50%;">0<svg style="position:relative;display:inline-block;vertical-align:baseline;margin-left:2.6px" width="5" height="6" viewBox="0 0 5 6"><path d="M0.2 0.6H4.8 M0.2 2.2H4.8 M2.5 2.2V6" stroke="#5a5a5a" stroke-width="1"/></svg></div>
<div class="t" style="left:817px;top:441.94px;font-size:9.240px;line-height:14px;color:#545454;font-weight:normal;transform:scaleX(0.9091);transform-origin:0 50%;">0<svg style="position:relative;display:inline-block;vertical-align:baseline;margin-left:2.6px" width="5" height="6" viewBox="0 0 5 6"><path d="M0.2 0.6H4.8 M0.2 2.2H4.8 M2.5 2.2V6" stroke="#5a5a5a" stroke-width="1"/></svg></div>
<div class="t" style="left:925.6px;top:441.94px;font-size:9.240px;line-height:14px;color:#545454;font-weight:normal;transform:scaleX(0.9091);transform-origin:0 50%;">0</div>
<div class="t" style="left:1000.6px;top:441.94px;font-size:9.240px;line-height:14px;color:#545454;font-weight:normal;transform:scaleX(0.9091);transform-origin:0 50%;">0<svg style="position:relative;display:inline-block;vertical-align:baseline;margin-left:2.6px" width="5" height="6" viewBox="0 0 5 6"><path d="M0.2 0.6H4.8 M0.2 2.2H4.8 M2.5 2.2V6" stroke="#5a5a5a" stroke-width="1"/></svg></div>
<div class="a" style="left:158.1px;top:472.22px;width:14.1px;height:14.1px;border:1px solid #d9dce6;border-radius:3.2px;background:#fff"></div>
<div class="t" style="left:184.1px;top:472.12px;font-size:9.130px;line-height:14px;color:#3a6db5;font-weight:normal;transform:scaleX(0.9091);transform-origin:0 50%;">Мария</div>
<div class="t" style="left:546.1px;top:472.12px;font-size:9.240px;line-height:14px;color:#545454;font-weight:normal;transform:scaleX(0.9091);transform-origin:0 50%;">+7 712 558-96-63</div>
<div class="t" style="left:745px;top:472.12px;font-size:9.240px;line-height:14px;color:#545454;font-weight:normal;transform:scaleX(0.9091);transform-origin:0 50%;">234 501<svg style="position:relative;display:inline-block;vertical-align:baseline;margin-left:2.6px" width="5" height="6" viewBox="0 0 5 6"><path d="M0.2 0.6H4.8 M0.2 2.2H4.8 M2.5 2.2V6" stroke="#5a5a5a" stroke-width="1"/></svg></div>
<div class="t" style="left:817px;top:472.12px;font-size:9.240px;line-height:14px;color:#545454;font-weight:normal;transform:scaleX(0.9091);transform-origin:0 50%;">0<svg style="position:relative;display:inline-block;vertical-align:baseline;margin-left:2.6px" width="5" height="6" viewBox="0 0 5 6"><path d="M0.2 0.6H4.8 M0.2 2.2H4.8 M2.5 2.2V6" stroke="#5a5a5a" stroke-width="1"/></svg></div>
<div class="t" style="left:925.6px;top:472.12px;font-size:9.240px;line-height:14px;color:#545454;font-weight:normal;transform:scaleX(0.9091);transform-origin:0 50%;">3</div>
<div class="t" style="left:1000.6px;top:472.12px;font-size:9.240px;line-height:14px;color:#545454;font-weight:normal;transform:scaleX(0.9091);transform-origin:0 50%;">5<svg style="position:relative;display:inline-block;vertical-align:baseline;margin-left:2.6px" width="5" height="6" viewBox="0 0 5 6"><path d="M0.2 0.6H4.8 M0.2 2.2H4.8 M2.5 2.2V6" stroke="#5a5a5a" stroke-width="1"/></svg></div>
<div class="a" style="left:158.1px;top:502.39px;width:14.1px;height:14.1px;border:1px solid #d9dce6;border-radius:3.2px;background:#fff"></div>
<div class="t" style="left:184.1px;top:502.29px;font-size:9.130px;line-height:14px;color:#3a6db5;font-weight:normal;transform:scaleX(0.9091);transform-origin:0 50%;">Карен</div>
<div class="t" style="left:546.1px;top:502.29px;font-size:9.240px;line-height:14px;color:#545454;font-weight:normal;transform:scaleX(0.9091);transform-origin:0 50%;">+7 745 256-56-62</div>
<div class="t" style="left:745px;top:502.29px;font-size:9.240px;line-height:14px;color:#545454;font-weight:normal;transform:scaleX(0.9091);transform-origin:0 50%;">146 000<svg style="position:relative;display:inline-block;vertical-align:baseline;margin-left:2.6px" width="5" height="6" viewBox="0 0 5 6"><path d="M0.2 0.6H4.8 M0.2 2.2H4.8 M2.5 2.2V6" stroke="#5a5a5a" stroke-width="1"/></svg></div>
<div class="t" style="left:817px;top:502.29px;font-size:9.240px;line-height:14px;color:#545454;font-weight:normal;transform:scaleX(0.9091);transform-origin:0 50%;">0<svg style="position:relative;display:inline-block;vertical-align:baseline;margin-left:2.6px" width="5" height="6" viewBox="0 0 5 6"><path d="M0.2 0.6H4.8 M0.2 2.2H4.8 M2.5 2.2V6" stroke="#5a5a5a" stroke-width="1"/></svg></div>
<div class="t" style="left:925.6px;top:502.29px;font-size:9.240px;line-height:14px;color:#545454;font-weight:normal;transform:scaleX(0.9091);transform-origin:0 50%;">6</div>
<div class="t" style="left:1000.6px;top:502.29px;font-size:9.240px;line-height:14px;color:#545454;font-weight:normal;transform:scaleX(0.9091);transform-origin:0 50%;">5<svg style="position:relative;display:inline-block;vertical-align:baseline;margin-left:2.6px" width="5" height="6" viewBox="0 0 5 6"><path d="M0.2 0.6H4.8 M0.2 2.2H4.8 M2.5 2.2V6" stroke="#5a5a5a" stroke-width="1"/></svg></div>
<div class="a" style="left:148px;top:534px;width:40px;height:0"></div>
<div class="a" style="left:159.5px;top:532.6px;width:11.3px;height:1.4px;border-top:1px solid #dde0ea"></div>
<div class="a" style="left:1009.6px;top:149.6px;width:15px;height:384.4px;background:#f1f2f7"></div>
<div class="a" style="left:999.8px;top:168.2px;width:18.6px;height:18.6px;border-radius:50%;background:#fff;border:1px solid #e9e9ee"></div>
<svg style="left:1004.9px;top:173.2px" width="8.8" height="8.8" viewBox="1.5 1.5 21 21"><path fill="#f29b38" d="M19.4 13a7.5 7.5 0 0 0 0-2l2.1-1.6-2-3.5-2.5 1a7.6 7.6 0 0 0-1.7-1L15 3h-4l-.4 2.9a7.6 7.6 0 0 0-1.7 1l-2.5-1-2 3.5L6.5 11a7.5 7.5 0 0 0 0 2l-2.1 1.6 2 3.5 2.5-1a7.6 7.6 0 0 0 1.7 1L11 21h4l.4-2.9a7.6 7.6 0 0 0 1.7-1l2.5 1 2-3.5zM13 15.5a3.5 3.5 0 1 1 0-7 3.5 3.5 0 0 1 0 7z"/></svg>
<div class="a" style="left:132px;top:534px;width:892px;height:42px;background:#fff"></div>
<div class="a" style="left:144px;top:546.3px;width:30.5px;height:18.4px;border:1px solid #e8e8e8;border-radius:2px;background:#fff"></div>
<div class="t" style="left:152.8px;top:549.30px;font-size:9.660px;line-height:14px;color:#444;font-weight:normal;transform:scaleX(0.8696);transform-origin:0 50%;">25</div>
<svg style="left:167.8px;top:551.5px" width="3.4" height="7.2" viewBox="0 0 4 8"><path d="M0 3.2L2 0.5L4 3.2Z M0 4.8L2 7.5L4 4.8Z" fill="#444"/></svg>
<div class="t" style="left:180.6px;top:549.30px;font-size:9.614px;line-height:14px;color:#555;font-weight:normal;transform:scaleX(0.8696);transform-origin:0 50%;">результатов на странице</div>
<div class="a" style="left:289.1px;top:546px;width:111.3px;height:18.6px;border:1px solid #e3e3e3;border-radius:2px;background:#fff"></div>
<div class="a" style="left:325.4px;top:547px;width:16.4px;height:16.6px;background:#ececec"></div>
<div class="a" style="left:325.4px;top:546px;width:0.8px;height:18.6px;background:#e3e3e3"></div>
<div class="a" style="left:341.8px;top:546px;width:0.8px;height:18.6px;background:#e3e3e3"></div>
<div class="a" style="left:359.1px;top:546px;width:0.8px;height:18.6px;background:#e3e3e3"></div>
<div class="t" style="left:295.8px;top:549.30px;font-size:9.315px;line-height:14px;color:#666;font-weight:normal;transform:scaleX(0.8696);transform-origin:0 50%;">Назад</div>
<div class="t" style="left:331.2px;top:549.30px;font-size:9.315px;line-height:14px;color:#3a6db5;font-weight:normal;transform:scaleX(0.8696);transform-origin:0 50%;">1</div>
<div class="t" style="left:348px;top:549.30px;font-size:9.315px;line-height:14px;color:#666;font-weight:normal;transform:scaleX(0.8696);transform-origin:0 50%;">2</div>
<div class="t" style="left:365.9px;top:549.30px;font-size:9.315px;line-height:14px;color:#666;font-weight:normal;transform:scaleX(0.8696);transform-origin:0 50%;">Вперед</div>
<div class="t" style="left:766px;top:549.20px;font-size:10.258px;line-height:14px;color:#555;font-weight:normal;transform:scaleX(0.8696);transform-origin:0 50%;">Показаны результаты с 1 по 25 из <span style="color:#f08a3c">28</span></div>
<div class="a" style="left:931.2px;top:546.3px;width:80.7px;height:18.1px;border-radius:2.5px;background:#2f75bf"></div>
<div class="t" style="left:946.9px;top:549.20px;font-size:9.096px;line-height:14px;color:#fff;font-weight:bold;transform:scaleX(0.8696);transform-origin:0 50%;">Действия</div>
<svg style="left:991.4px;top:552.2px" width="4.6" height="6.6" viewBox="0 0 5 8"><path d="M0.3 3.2L2.5 0.5L4.7 3.2Z M0.3 4.8L2.5 7.5L4.7 4.8Z" fill="#fff"/></svg>
<div class="a" style="left:1006.3px;top:554.2px;width:18px;height:15.8px;background:#dcdfe7;border-radius:3px 0 0 3px"></div>
<svg style="left:1013px;top:558.3px" width="5" height="7.7" viewBox="0 0 5 8"><path d="M0.8 0.8L4 4L0.8 7.2" fill="none" stroke="#111" stroke-width="1.5"/></svg>
<div class="a" style="left:132px;top:0;width:1px;height:576px;background:rgba(20,20,40,0.12)"></div>
<svg style="left:0;top:0" width="1024" height="576" viewBox="0 0 1024 576"><path d="M849.6 128.6 L919.5 51.5" stroke="#ec3b17" stroke-width="2.1" stroke-linecap="round"/><path d="M927 42.6 L914.3 48.1 L924.4 55.8 Z" fill="#ec3b17" stroke="#ec3b17" stroke-width="0.8" stroke-linejoin="round"/></svg>
</body></html>
